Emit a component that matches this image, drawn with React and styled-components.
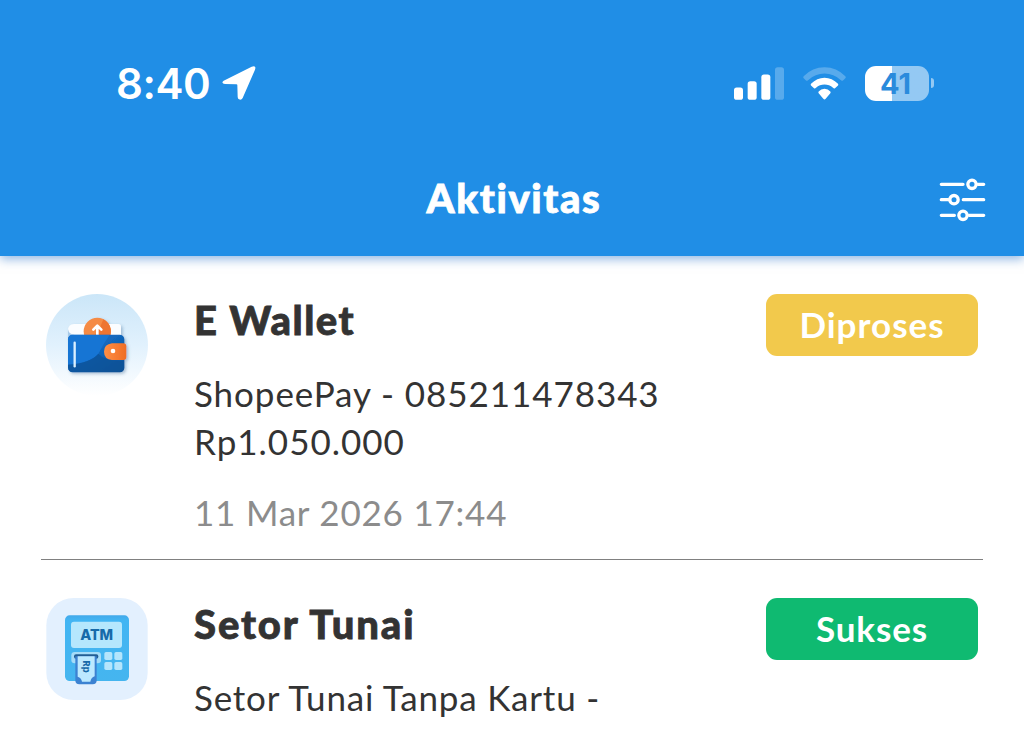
import styled, { createGlobalStyle } from 'styled-components';

const GlobalStyle = createGlobalStyle`
  * {
    box-sizing: border-box;
  }

  body {
    margin: 0;
    background: #ffffff;
    font-family: Lato, 'Open Sans', sans-serif;
    overflow: hidden;
  }

  svg {
    display: block;
    overflow: visible;
  }
`;

const Screen = styled.div`
  width: 100%;
  height: 100vh;
  overflow: hidden;
  color: #333333;
`;

const Header = styled.header`
  position: relative;
  height: 256px;
  background: #208ee6;
  color: #ffffff;
  box-shadow: 0 3px 10px rgba(32, 110, 200, 0.5);
`;

const StatusBar = styled.div`
  display: flex;
  justify-content: space-between;
  align-items: center;
  height: 166px;
  padding: 0 90px 0 116px;
`;

const Clock = styled.div`
  display: flex;
  align-items: center;
  gap: 12px;
  font-family: Inter, sans-serif;
  font-size: 42px;
  font-weight: 600;
  line-height: 50px;
  letter-spacing: -0.4px;
`;

const Time = styled.span`
  padding-top: 2px;
`;

const StatusIcons = styled.div`
  display: flex;
  align-items: center;
  gap: 19px;
`;

const Battery = styled.div`
  display: flex;
  align-items: center;
  gap: 2px;
`;

const BatteryBody = styled.div`
  width: 64px;
  height: 35px;
  padding-right: 3px;
  border-radius: 11px;
  background: linear-gradient(
    to right,
    #ffffff ${(props) => props.$level}%,
    rgba(255, 255, 255, 0.52) ${(props) => props.$level}%
  );
  color: #2a8bdc;
  font-family: Inter, sans-serif;
  font-size: 29px;
  font-weight: 700;
  line-height: 36px;
  text-align: center;
`;

const BatteryTip = styled.div`
  width: 3px;
  height: 10px;
  border-radius: 0 5px 5px 0;
  background: rgba(255, 255, 255, 0.52);
`;

const TitleBar = styled.div`
  display: grid;
  grid-template-columns: 46px 1fr 46px;
  align-items: center;
  height: 66px;
  padding: 0 38px;
`;

const PageTitle = styled.h1`
  grid-column: 2;
  margin: 0;
  padding: 0 0 2px 4px;
  font-size: 40px;
  font-weight: 900;
  line-height: 50px;
  letter-spacing: 1.6px;
  text-align: center;
  -webkit-text-stroke: 0.8px currentColor;
`;

const List = styled.main`
  padding: 0 41px;
`;

const Item = styled.article`
  display: grid;
  grid-template-columns: 102px 1fr 212px;
  align-items: start;
  column-gap: 46px;
  padding: 38px 5px 23px;
  border-bottom: 1px solid #808080;
`;

const ItemTitle = styled.h2`
  margin: 0;
  padding: 1px 0 24px;
  font-size: 40px;
  font-weight: 900;
  line-height: 50px;
  letter-spacing: ${(props) => props.$spacing}px;
  -webkit-text-stroke: 0.8px currentColor;
`;

const Detail = styled.p`
  margin: 0;
  font-size: 35px;
  line-height: 48px;
  letter-spacing: ${(props) => props.$spacing}px;
  white-space: nowrap;
`;

const DateText = styled(Detail)`
  margin-top: 23px;
  color: #8c8c8c;
`;

const Badge = styled.div`
  height: 62px;
  border-radius: 11px;
  background: ${(props) => props.$color};
  color: #ffffff;
  font-size: 35px;
  font-weight: 700;
  line-height: 60px;
  letter-spacing: ${(props) => props.$spacing}px;
  text-align: center;
`;

const LocationArrow = () => (
  <svg width="34" height="34" viewBox="0 0 100 102" fill="#fff">
    <path d="M4 44 L88 2 Q103-3 98 11 L61 96 Q57 103 50 100 Q46 98 46 92 L45 57 Q45 55 42 55 L8 54 Q-2 52 1 47 Q2 45 4 44Z" />
  </svg>
);

const Signal = () => (
  <svg width="50" height="33" viewBox="0 0 150 98" fill="#fff">
    <rect y="61" width="27" height="37" rx="8" />
    <rect x="41" y="42" width="27" height="56" rx="8" />
    <rect x="82" y="22" width="27" height="76" rx="8" />
    <rect x="123" width="27" height="98" rx="8" opacity="0.25" />
  </svg>
);

const Wifi = () => (
  <svg width="43" height="33" viewBox="0 0 129 98" fill="#fff">
    <path d="M2 27 Q28 0 64.500 0 Q101 0 127 27 Q130 30 127 33 L120 40 Q117 42 114 39 Q92 19 64.500 19 Q37 19 15 39 Q12 42 9 40 L2 33 Q-1 30 2 27Z" opacity="0.25" />
    <path d="M24 50 Q42 32 64.500 32 Q87 32 105 50 Q107 53 105 55 L96 63 Q93 65 90 62 Q79 52 64.500 52 Q50 52 39 62 Q36 65 33 63 L24 55 Q22 53 24 50Z" />
    <path d="M47 73 Q54 65 64.500 65 Q75 65 82 73 Q84 76 82 78 L68 95 Q64.500 99 61 95 L47 78 Q45 76 47 73Z" />
  </svg>
);

const FilterIcon = () => (
  <svg width="46" height="43" viewBox="0 0 138 129" fill="none" stroke="#fff" strokeWidth="10" strokeLinecap="round">
    <path d="M4 19H69M114 19H131M4 65H25M70 65H131M4 112H43M88 112H131" />
    <circle cx="96" cy="19" r="12.500" />
    <circle cx="42" cy="65" r="12.500" />
    <circle cx="69" cy="112" r="12.500" />
  </svg>
);

const WalletIcon = () => (
  <svg width="102" height="102" viewBox="48 42 306 306">
    <defs>
      <linearGradient id="walletBg" x1="0" y1="0" x2="0" y2="1">
        <stop offset="0" stopColor="#cbe6f8" />
        <stop offset="0.5" stopColor="#e1f1fd" />
        <stop offset="1" stopColor="#ffffff" />
      </linearGradient>
      <linearGradient id="walletBody" x1="0" y1="0" x2="1" y2="1">
        <stop offset="0" stopColor="#1671cf" />
        <stop offset="0.45" stopColor="#1267bd" />
        <stop offset="1" stopColor="#06539a" />
      </linearGradient>
      <linearGradient id="walletOrange" x1="0" y1="0" x2="1" y2="0">
        <stop offset="0" stopColor="#ff8f45" />
        <stop offset="1" stopColor="#ef6d25" />
      </linearGradient>
      <filter id="walletShadow" x="-20%" y="-20%" width="150%" height="150%">
        <feDropShadow dx="5" dy="5" stdDeviation="4" floodColor="#3e6c96" floodOpacity="0.4" />
      </filter>
      <clipPath id="walletClip">
        <rect x="114" y="164" width="169" height="113" rx="14" />
      </clipPath>
    </defs>
    <circle cx="201" cy="195" r="153" fill="url(#walletBg)" />
    <g filter="url(#walletShadow)">
      <path d="M114 152 Q114 132 132 132 H265 Q273 132 273 140 V170 H130 Q114 170 114 152Z" fill="#fbfdff" />
      <path d="M114 148 Q117 164 134 164 H165 V176 H114Z" fill="#a9cae8" />
      <circle cx="202" cy="154" r="41" fill="#f58b44" />
      <path d="M174 184 Q205 165 220 118 A41 41 0 0 1 232 182Z" fill="#ee7430" />
      <path d="M202 166V139M190 149L202 137L214 149" fill="none" stroke="#fff" strokeWidth="8" strokeLinecap="round" strokeLinejoin="round" />
      <rect x="114" y="164" width="169" height="113" rx="14" fill="url(#walletBody)" />
      <g clipPath="url(#walletClip)">
        <path d="M114 164 H239 Q219 193 205 221 Q180 250 114 254Z" fill="#1975d4" />
        <path d="M114 254 Q180 250 205 221 Q225 244 283 242 V277 H114Z" fill="#075094" opacity="0.65" />
      </g>
      <path d="M134 188V259" stroke="#d9efff" strokeWidth="7" strokeLinecap="round" />
      <path d="M246 190 H280 Q289 190 289 199 V231 Q289 240 280 240 H246 Q222 237 222 215 Q222 193 246 190Z" fill="url(#walletOrange)" />
    </g>
    <circle cx="249" cy="213" r="7" fill="#fff" />
  </svg>
);

const AtmText = styled.text`
  font-family: Inter, sans-serif;
  font-weight: 800;
  fill: #176aa9;
`;

const AtmIcon = () => (
  <svg width="102" height="102" viewBox="48 39 306 306">
    <defs>
      <linearGradient id="atmBody" x1="0" y1="0" x2="0" y2="1">
        <stop offset="0" stopColor="#42a9ea" />
        <stop offset="0.08" stopColor="#42b5f3" />
        <stop offset="1" stopColor="#45b5ef" />
      </linearGradient>
    </defs>
    <rect x="49" y="39" width="304" height="306" rx="82" fill="#e3f0fe" />
    <rect x="105" y="91" width="192" height="197" rx="14" fill="url(#atmBody)" />
    <rect x="123" y="110" width="153" height="79" rx="9" fill="#b5e7fd" />
    <AtmText x="200" y="166" fontSize="43" textAnchor="middle" textLength="98">ATM</AtmText>
    <rect x="124" y="201" width="89" height="34" rx="10" fill="#a5dcf8" />
    <rect x="132" y="208" width="73" height="13" rx="6" fill="#225d93" />
    <path d="M136 214 H200 V286 Q200 298 188 298 H148 Q136 298 136 286Z" fill="#3c82d2" />
    <path d="M143 214 H194 V274 Q184 277 181 290 H156 Q154 278 143 275Z" fill="#bce9ff" />
    <AtmText fontSize="28" textAnchor="middle" transform="translate(159 245) rotate(90)">Rp</AtmText>
    <g fill="#b4e5fc">
      <rect x="223" y="201" width="24" height="24" rx="5" />
      <rect x="253" y="201" width="24" height="24" rx="5" />
      <rect x="223" y="231" width="24" height="24" rx="5" />
      <rect x="253" y="231" width="24" height="24" rx="5" />
    </g>
  </svg>
);

const App = () => {
  return (
    <Screen>
      <GlobalStyle />
      <Header>
        <StatusBar>
          <Clock>
            <Time>8:40</Time>
            <LocationArrow />
          </Clock>
          <StatusIcons>
            <Signal />
            <Wifi />
            <Battery>
              <BatteryBody $level={42}>41</BatteryBody>
              <BatteryTip />
            </Battery>
          </StatusIcons>
        </StatusBar>
        <TitleBar>
          <PageTitle>Aktivitas</PageTitle>
          <FilterIcon />
        </TitleBar>
      </Header>
      <List>
        <Item>
          <WalletIcon />
          <div>
            <ItemTitle $spacing={1.5}>E Wallet</ItemTitle>
            <Detail $spacing={0.93}>ShopeePay - 085211478343</Detail>
            <Detail $spacing={1}>Rp1.050.000</Detail>
            <DateText $spacing={0.78}>11 Mar 2026 17:44</DateText>
          </div>
          <Badge $color="#f2c94c" $spacing={1}>Diproses</Badge>
        </Item>
        <Item>
          <AtmIcon />
          <div>
            <ItemTitle $spacing={1.9}>Setor Tunai</ItemTitle>
            <Detail $spacing={0.8}>Setor Tunai Tanpa Kartu -</Detail>
          </div>
          <Badge $color="#0fba71" $spacing={0.9}>Sukses</Badge>
        </Item>
      </List>
    </Screen>
  );
};

export default App;
